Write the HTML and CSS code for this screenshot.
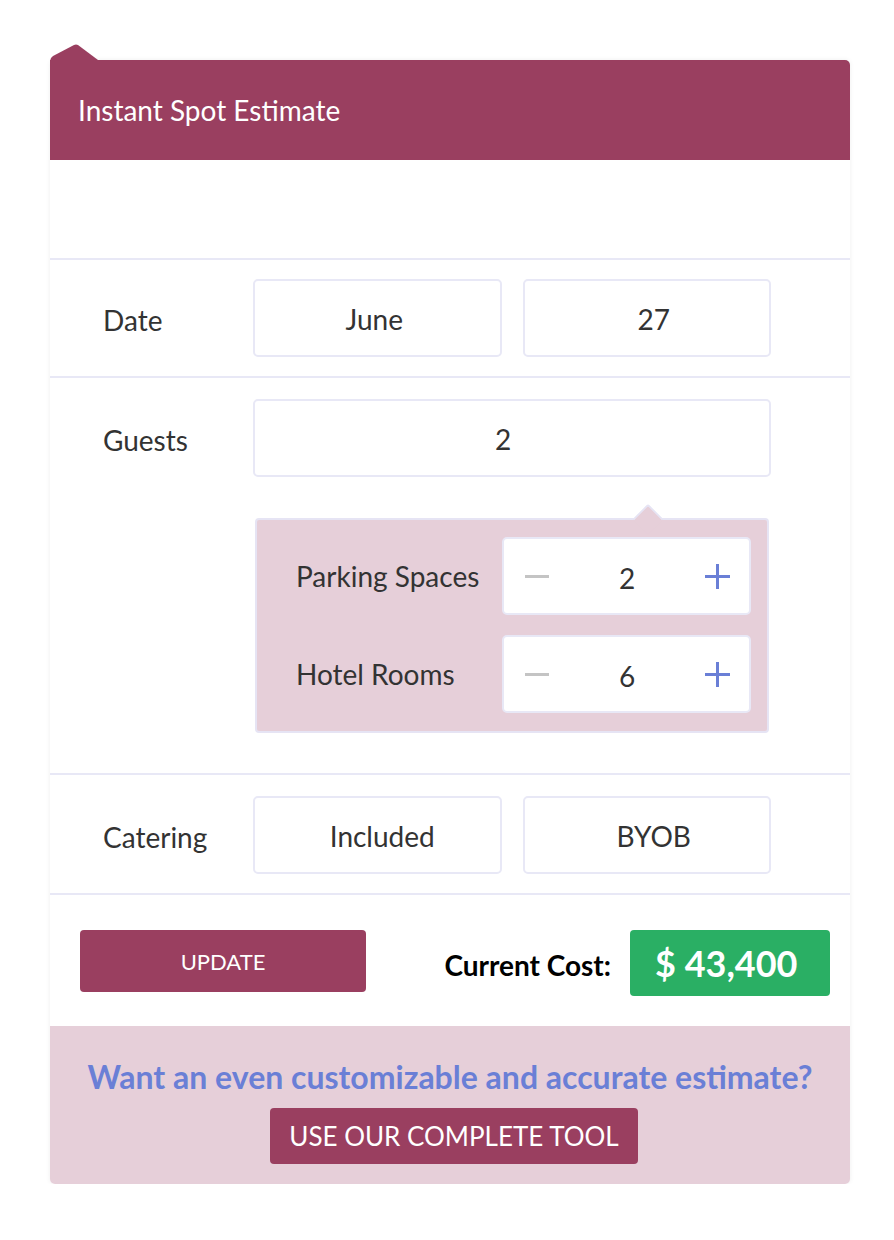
FILE: index.html
```html
<!DOCTYPE html>
<html lang="en">
<head>
    <meta charset="UTF-8">
    <meta name="viewport" content="width=device-width, initial-scale=1.0">
    <title>Instant Spot Estimate</title>
    <link rel="stylesheet" href="styles.css">
</head>
<body>
    <div class="card">
      <svg class="notch" width="50" height="18" viewBox="0 0 50 18"><path d="M0 17 Q0 14 3 12 L24 1 Q26 0 28 1 L48 16 L48 18 L0 18 Z" fill="#9a3f60"/></svg>
      <div class="header">Instant Spot Estimate</div>
      <div class="blank"></div>

      <div class="row">
        <div class="label">Date</div>
        <div class="fields">
          <div class="box">June</div>
          <div class="box">27</div>
        </div>
      </div>

      <div class="row guests">
        <div class="label">Guests</div>
        <div class="fields col">
          <div class="box wide">2</div>
          <div class="popover">
            <div class="extra">
              <span>Parking Spaces</span>
              <div class="stepper">
                <span class="minus"></span>
                <span class="num">2</span>
                <span class="plus"></span>
              </div>
            </div>
            <div class="extra">
              <span>Hotel Rooms</span>
              <div class="stepper">
                <span class="minus"></span>
                <span class="num">6</span>
                <span class="plus"></span>
              </div>
            </div>
          </div>
        </div>
      </div>

      <div class="row catering">
        <div class="label">Catering</div>
        <div class="fields">
          <div class="box">Included</div>
          <div class="box">BYOB</div>
        </div>
      </div>

      <div class="row footer">
        <button class="update">UPDATE</button>
        <div class="cost">
          <span class="cost-label">Current Cost:</span>
          <span class="price">$ 43,400</span>
        </div>
      </div>

      <div class="promo">
        <p>Want an even customizable and accurate estimate?</p>
        <button class="tool">USE OUR COMPLETE TOOL</button>
      </div>
    </div>
</body>
</html>
```

FILE: styles.css
```css
body {
  margin: 0;
  background: #fff;
  font-family: Lato, "Open Sans", sans-serif;
  color: #333;
}
.card {
  position: relative;
  width: 800px;
  margin: 60px 0 0 50px;
  background: #fff;
  box-shadow: 0 0 5px rgba(0, 0, 0, 0.07);
  border-radius: 5px;
}
.notch {
  position: absolute;
  left: 0;
  top: -16px;
}
.header {
  background: #9a3f60;
  color: #fff;
  height: 100px;
  box-sizing: border-box;
  padding-left: 28px;
  display: flex;
  align-items: center;
  font-size: 28px;
  border-radius: 0 5px 0 0;
}
.blank {
  height: 98px;
}
.row {
  display: flex;
  border-top: 2px solid #e8e8f6;
  padding: 19px 79px 19px 53px;
}
.label {
  width: 150px;
  height: 78px;
  font-size: 28px;
  line-height: 82px;
}
.fields {
  flex: 1;
  display: grid;
  grid-template-columns: 1fr 1fr;
  gap: 21px;
}
.fields.col {
  display: flex;
  flex-direction: column;
  gap: 0;
}
.box {
  height: 78px;
  box-sizing: border-box;
  border: 2px solid #e8e8f6;
  border-radius: 5px;
  display: flex;
  align-items: center;
  justify-content: center;
  font-size: 28px;
  padding: 2px 6px 0 0;
}
.box + .box {
  padding: 2px 0 0 14px;
}
.catering .box:first-child {
  padding: 2px 0 0 10px;
}
.box.wide {
  padding: 2px 18px 0 0;
}
.guests {
  padding-top: 21px;
  padding-bottom: 40px;
}
.catering {
  padding-top: 21px;
}
.popover {
  position: relative;
  margin: 41px 2px 0;
  background: #e6cfd9;
  border: 2px solid #e6e4f4;
  border-radius: 4px;
  padding: 17px 16px 18px 39px;
  display: flex;
  flex-direction: column;
  gap: 20px;
}
.popover::before {
  content: "";
  position: absolute;
  top: -12px;
  left: 380px;
  width: 20px;
  height: 20px;
  background: #e6cfd9;
  border-top: 2px solid #e6e4f4;
  border-left: 2px solid #e6e4f4;
  border-top-left-radius: 3px;
  transform: rotate(45deg);
}
.extra {
  display: flex;
  align-items: center;
  justify-content: space-between;
  font-size: 28px;
}
.stepper {
  position: relative;
  width: 249px;
  height: 78px;
  box-sizing: border-box;
  background: #fff;
  border: 2px solid #e8e8f6;
  border-radius: 5px;
  display: flex;
  align-items: center;
  justify-content: space-between;
  padding: 0 19px 0 21px;
}
.num {
  font-size: 28px;
  padding-top: 4px;
}
.minus {
  width: 24px;
  height: 3px;
  background: #c4c4c4;
}
.plus {
  position: relative;
  width: 25px;
  height: 25px;
}
.plus::before,
.plus::after {
  content: "";
  position: absolute;
  background: #6a7fd6;
}
.plus::before {
  left: 0;
  right: 0;
  top: 11px;
  height: 3px;
}
.plus::after {
  top: 0;
  bottom: 0;
  left: 11px;
  width: 3px;
}
.footer {
  align-items: flex-start;
  justify-content: space-between;
  padding: 35px 20px 30px 30px;
}
button {
  font-family: Lato, "Open Sans", sans-serif;
  border: none;
  color: #fff;
  background: #9a3f60;
  border-radius: 4px;
}
.update {
  width: 286px;
  height: 62px;
  font-size: 22px;
  padding-top: 2px;
}
.cost {
  display: flex;
  align-items: center;
  gap: 19px;
}
.cost-label {
  font-weight: 700;
  font-size: 28px;
  color: #000;
  padding-top: 4px;
}
.price {
  width: 200px;
  height: 66px;
  box-sizing: border-box;
  background: #2aaf64;
  color: #fff;
  border-radius: 4px;
  font-weight: 700;
  font-size: 36px;
  padding-left: 25px;
  display: flex;
  align-items: center;
}
.promo {
  background: #e6cfd9;
  border-radius: 0 0 5px 5px;
  height: 158px;
  box-sizing: border-box;
  padding-top: 32px;
  display: flex;
  flex-direction: column;
  align-items: center;
}
.promo p {
  margin: 0;
  color: #6a7fd6;
  font-weight: 700;
  font-size: 32px;
  line-height: 38px;
}
.tool {
  margin: 12px 0 0 8px;
  width: 368px;
  height: 56px;
  font-size: 26px;
}
```
